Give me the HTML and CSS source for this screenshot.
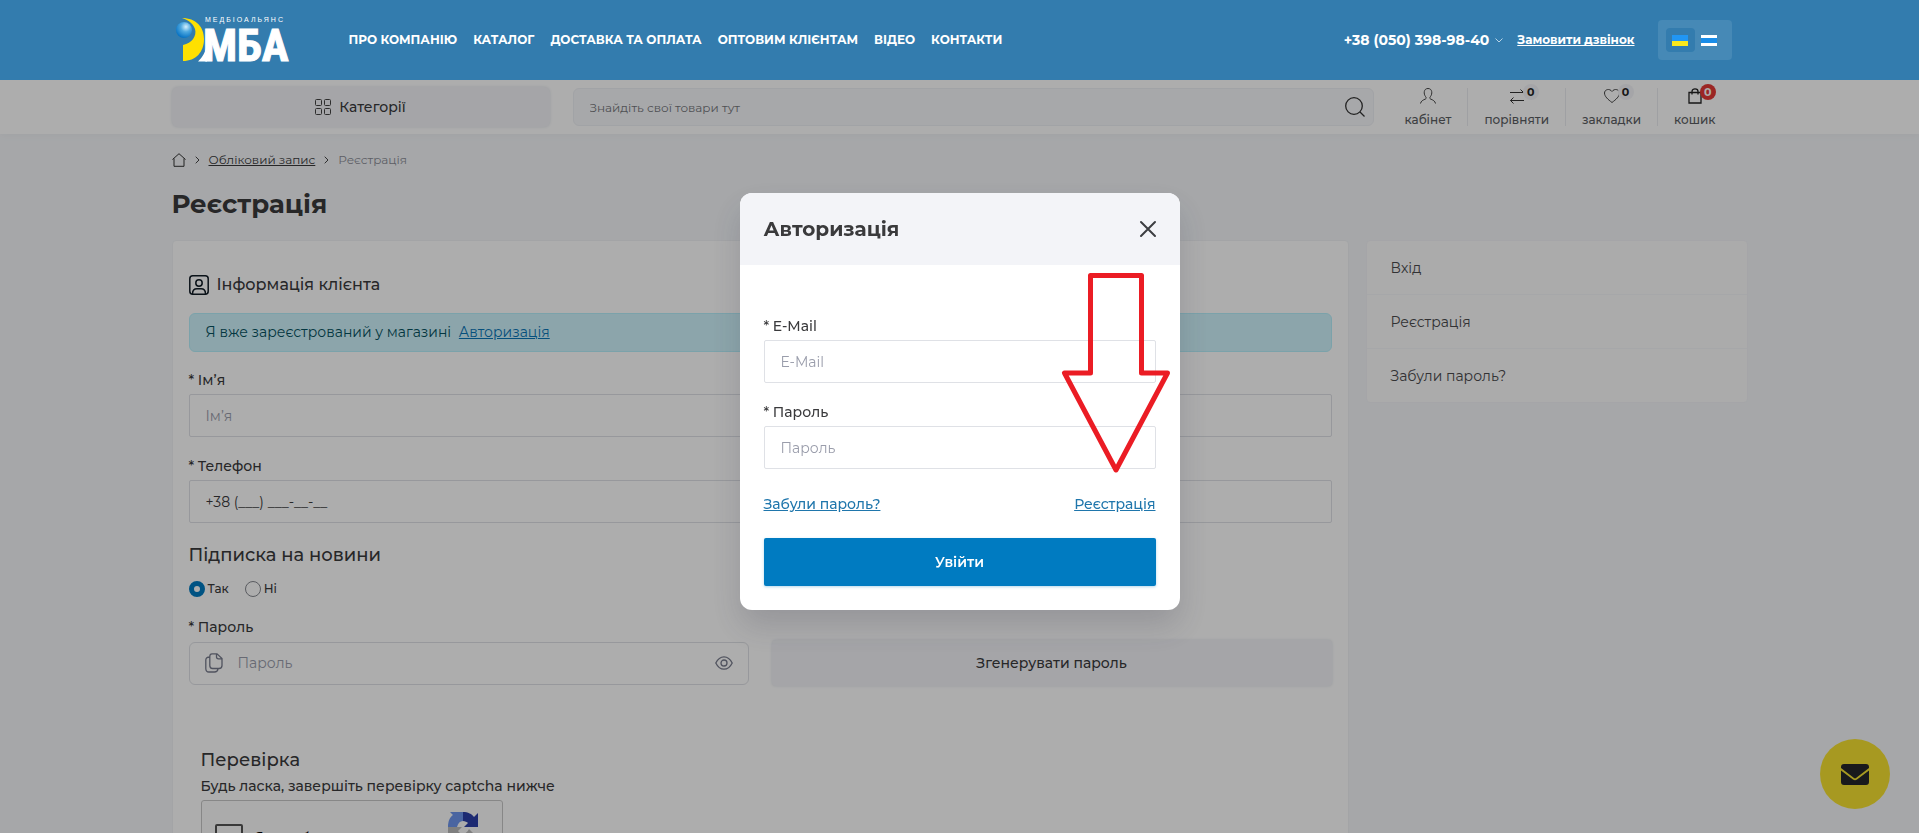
FILE: index.html
```html
<!DOCTYPE html>
<html lang="uk">
<head>
    <meta charset="UTF-8">
    <meta name="viewport" content="width=device-width, initial-scale=1.0">
    <title>Реєстрація</title>
    <link rel="stylesheet" href="styles.css">
</head>
<body class="modal-open">
    <header class="top">
        <div class="container top-inner">
            <a href="#" class="logo" aria-label="МБА">
                <svg width="116" height="46" viewBox="0 0 116 46">
                    <defs>
                        <radialGradient id="ball" cx="0.62" cy="0.3" r="0.7">
                            <stop offset="0" stop-color="#d5f0fd"/>
                            <stop offset="0.45" stop-color="#4fa9e0"/>
                            <stop offset="1" stop-color="#0873c4"/>
                        </radialGradient>
                    </defs>
                    <path d="M6 1C20 1 28 10 28 22C28 35 20 44 7 44V28C16 26 21 19 19 12C17 6 12 3 6 1Z" fill="#ffe000"/>
                    <circle cx="8" cy="13" r="8" fill="url(#ball)"/>
                    <path d="M22 44.500C28 39 31 32 31 22V44.500Z" fill="#fff"/>
                    <text x="29" y="5" class="logo-small">МЕДБІОАЛЬЯНС</text>
                    <text x="27" y="44" class="logo-big">МБА</text>
                </svg>
            </a>
            <nav class="menu">
                <a href="#">ПРО КОМПАНІЮ</a>
                <a href="#">КАТАЛОГ</a>
                <a href="#">ДОСТАВКА ТА ОПЛАТА</a>
                <a href="#">ОПТОВИМ КЛІЄНТАМ</a>
                <a href="#">ВІДЕО</a>
                <a href="#">КОНТАКТИ</a>
            </nav>
            <button type="button" class="phone">+38 (050) 398-98-40
                <svg width="8" height="5" viewBox="0 0 8 5" fill="none" stroke="#b8d3e6"><path d="M.5 .5L4 4L7.5 .5"/></svg>
            </button>
            <a href="#" class="callback">Замовити дзвінок</a>
            <div class="lang">
                <button type="button" class="lang-btn active" aria-label="Українська">
                    <svg width="16" height="11"><rect width="16" height="6" fill="#2196f3"/><rect y="6" width="16" height="5" fill="#f9e81c"/></svg>
                </button>
                <button type="button" class="lang-btn" aria-label="Інша мова">
                    <svg width="16" height="11"><rect width="16" height="11" fill="#fff"/><rect y="3" width="16" height="5" fill="#1a8de8"/></svg>
                </button>
            </div>
        </div>
    </header>

    <div class="bar">
        <div class="container bar-inner">
            <button type="button" class="categories">
                <svg width="16" height="16" viewBox="0 0 16 16" fill="none" stroke="#444"><rect x=".5" y=".5" width="6" height="6" rx="1"/><rect x="9.500" y=".5" width="6" height="6" rx="1"/><rect x=".5" y="9.500" width="6" height="6" rx="1"/><rect x="9.500" y="9.500" width="6" height="6" rx="1"/></svg>
                Категорії
            </button>
            <form class="search">
                <input type="text" placeholder="Знайдіть свої товари тут" aria-label="Пошук">
                <button type="submit" aria-label="Шукати">
                    <svg width="20" height="20" viewBox="0 0 20 20" fill="none" stroke="#333" stroke-width="1.300"><circle cx="9" cy="9" r="8.300"/><path d="M15 15L19.500 19.500"/></svg>
                </button>
            </form>
            <div class="actions">
                <a href="#" class="action">
                    <span class="action-icon"><svg width="16" height="16" viewBox="0 0 16 16" fill="none" stroke="#444"><path d="M.5 15.500C1 13 3 12 5.500 11C6.500 10.500 6.300 9.500 5.500 8.500C3.500 6 3.500 .5 8 .5S12.500 6 10.500 8.500C9.700 9.500 9.500 10.500 10.500 11C13 12 15 13 15.500 15.500"/></svg></span>
                    кабінет
                </a>
                <a href="#" class="action">
                    <span class="action-icon"><svg width="16" height="16" viewBox="0 0 16 16" fill="none" stroke="#333"><path d="M1 4.500H14.500M11.500 1.500L14.500 4.500M15 12.500H1.500M4.500 15.500L1.500 12.500L4.500 9.500"/></svg><span class="count">0</span></span>
                    порівняти
                </a>
                <a href="#" class="action">
                    <span class="action-icon"><svg width="16" height="16" viewBox="0 0 16 16" fill="none" stroke="#444"><path d="M8 14.500C4 11.500 .5 8.500 .5 5C.5 1.500 5.500 0 8 3.500C10.500 0 15.500 1.500 15.500 5C15.500 8.500 12 11.500 8 14.500Z"/></svg><span class="count">0</span></span>
                    закладки
                </a>
                <a href="#" class="action">
                    <span class="action-icon"><svg width="14" height="16" viewBox="0 0 14 16" fill="none" stroke="#222" stroke-width="1.300"><path d="M1 4.500H13V15H1ZM4 6.500V3.500C4 0 10 0 10 3.500V6.500"/></svg><span class="count count-cart">0</span></span>
                    кошик
                </a>
            </div>
        </div>
    </div>

    <main class="container">
        <nav class="breadcrumbs">
            <a href="#" aria-label="Головна"><svg width="14" height="14" viewBox="0 0 14 14" fill="none" stroke="#333"><path d="M.5 6.500L7 .7L13.500 6.500M2 5.500V13.300H12V5.500"/></svg></a>
            <svg width="5" height="8" viewBox="0 0 5 8" fill="none" stroke="#444"><path d="M.7 .7L4 4L.7 7.300"/></svg>
            <a href="#">Обліковий запис</a>
            <svg width="5" height="8" viewBox="0 0 5 8" fill="none" stroke="#444"><path d="M.7 .7L4 4L.7 7.300"/></svg>
            <span>Реєстрація</span>
        </nav>
        <h1>Реєстрація</h1>

        <div class="columns">
            <form class="card">
                <h2 class="info-title">
                    <svg width="20" height="20" viewBox="0 0 20 20" fill="none" stroke="#111c26" stroke-width="1.500"><rect x=".8" y=".8" width="18.400" height="18.400" rx="3"/><circle cx="10" cy="8" r="3.200"/><path d="M3.500 19C3.500 15.500 5.500 13.800 8 13.800H12C14.500 13.800 16.500 15.500 16.500 19"/></svg>
                    Інформація клієнта
                </h2>
                <div class="alert">Я вже зареєстрований у магазині <a href="#">Авторизація</a></div>

                <div class="field">
                    <label for="name">* Ім’я</label>
                    <input type="text" id="name" class="input" placeholder="Ім’я">
                </div>
                <div class="field">
                    <label for="phone">* Телефон</label>
                    <input type="tel" id="phone" class="input" value="+38 (___) ___-__-__">
                </div>

                <h2 class="section-title">Підписка на новини</h2>
                <div class="radios">
                    <label><input type="radio" name="newsletter" checked>Так</label>
                    <label><input type="radio" name="newsletter">Ні</label>
                </div>

                <div class="field field-password">
                    <label for="password">* Пароль</label>
                    <div class="password-row">
                        <div class="password-box">
                            <svg width="18" height="20" viewBox="0 0 18 20" fill="none" stroke="#777b8c" stroke-width="1.300"><path d="M7 .8H12L17 5.500V12.500Q17 15.500 14 15.500H7.500Q4.800 15.500 4.800 12.500V3.500Q4.800 .8 7 .8ZM11.500 1V4Q11.500 5.800 13.500 5.800H17M4.800 4Q.8 4 .8 7V15.500Q.8 19 4 19H9.500Q12.500 19 13 15.800"/></svg>
                            <input type="password" id="password" placeholder="Пароль">
                            <button type="button" aria-label="Показати пароль">
                                <svg width="18" height="14" viewBox="0 0 18 14" fill="none" stroke="#777b8c" stroke-width="1.300"><path d="M.8 7C3 2.500 6 .8 9 .8S15 2.500 17.200 7C15 11.500 12 13.200 9 13.200S3 11.500 .8 7Z"/><circle cx="9" cy="7" r="3"/></svg>
                            </button>
                        </div>
                        <button type="button" class="generate">Згенерувати пароль</button>
                    </div>
                </div>

                <fieldset class="captcha">
                    <legend>Перевірка</legend>
                    <p>Будь ласка, завершіть перевірку captcha нижче</p>
                    <div class="recaptcha">
                        <label><input type="checkbox">Я не робот</label>
                        <svg width="32" height="32" viewBox="0 0 32 32">
                            <path d="M1 16C1 10 3 6 6 4L3 1H16V10C13 10 11 12 10 16Z" fill="#6e96ee"/>
                            <path d="M16 1C21 1 25 3 27 6L31 2V16H17L21 12C20 11 18 10 16 10Z" fill="#2b3fa8"/>
                            <path d="M1 16H15L11 20C14 24 19 24 22 18L28 24C21 34 10 33 5 26L1 30Z" fill="#bbb"/>
                        </svg>
                    </div>
                </fieldset>
            </form>

            <aside class="side">
                <a href="#">Вхід</a>
                <a href="#">Реєстрація</a>
                <a href="#">Забули пароль?</a>
            </aside>
        </div>
    </main>

    <button type="button" class="fab" aria-label="Написати нам">
        <svg width="28" height="21" viewBox="0 0 28 21"><path d="M0 3Q0 0 3 0H25Q28 0 28 3V4L15 14Q14 14.800 13 14L0 4Z" fill="#26262a"/><path d="M0 6.500L12 15.500Q14 17 16 15.500L28 6.500V18Q28 21 25 21H3Q0 21 0 18Z" fill="#26262a"/></svg>
    </button>

    <div class="overlay">
        <div class="modal" role="dialog" aria-labelledby="modal-title">
            <div class="modal-header">
                <h2 id="modal-title">Авторизація</h2>
                <button type="button" class="close" aria-label="Закрити">
                    <svg width="16" height="16" viewBox="0 0 16 16" stroke="#3c3e42" stroke-width="2" stroke-linecap="round"><path d="M1 1L15 15M15 1L1 15"/></svg>
                </button>
            </div>
            <form class="modal-body">
                <div class="field">
                    <label for="login-email">* E-Mail</label>
                    <input type="email" id="login-email" class="input" placeholder="E-Mail">
                </div>
                <div class="field">
                    <label for="login-password">* Пароль</label>
                    <input type="password" id="login-password" class="input" placeholder="Пароль">
                </div>
                <div class="modal-links">
                    <a href="#">Забули пароль?</a>
                    <a href="#">Реєстрація</a>
                </div>
                <button type="submit" class="submit">Увійти</button>
            </form>
            <svg class="arrow" width="108" height="202" viewBox="0 0 108 202" fill="none" stroke="#eb1c24" stroke-width="5" stroke-linejoin="round"><path d="M28.500 2.500H79.500V100H105.500L54 197L2.500 100H28.500Z"/></svg>
        </div>
    </div>
</body>
</html>
```
FILE: styles.css
```css
* {
    box-sizing: border-box;
}
body {
    margin: 0;
    font-family: "Montserrat", "Inter", sans-serif;
    font-size: 14px;
    font-weight: 500;
    line-height: 20px;
    color: #3a3a3c;
    background-color: #f5f7fa;
}
.modal-open {
    height: 100vh;
    overflow: hidden;
}
button, input {
    font-family: inherit;
    font-size: inherit;
    color: inherit;
}
button {
    border: 0;
    padding: 0;
    background: none;
    font-weight: 500;
    cursor: pointer;
}
input::placeholder {
    color: #9a9dab;
    opacity: 1;
}
svg {
    display: block;
    flex-shrink: 0;
    overflow: visible;
}
.container {
    max-width: 1600px;
    margin: 0 auto;
    padding: 0 12px;
}

/* header */
.top {
    position: relative;
    z-index: 20;
    background-color: #337cae;
    color: #fff;
}
.top a {
    color: #fff;
}
.top-inner {
    display: flex;
    align-items: center;
    height: 80px;
    padding-right: 28px;
}
.logo {
    margin-left: 4px;
    margin-right: 57px;
}
.logo-small {
    font: 7px "Liberation Sans", sans-serif;
    letter-spacing: 2px;
    fill: #fff;
}
.logo-big {
    font: bold 45px "Roboto Condensed", "Liberation Sans Narrow", sans-serif;
    fill: #fff;
    stroke: #fff;
    stroke-width: 1px;
}
.menu {
    display: flex;
    gap: 16px;
    margin-right: auto;
    font-size: 12px;
    font-weight: 700;
}
.menu a {
    text-decoration: none;
}
.phone {
    display: flex;
    align-items: center;
    gap: 6px;
    font-size: 14px;
    font-weight: 700;
}
.callback {
    margin: 0 23px 0 14px;
    font-size: 12px;
    font-weight: 700;
}
.lang {
    display: flex;
    padding: 8px;
    border-radius: 4px;
    background-color: #4689b6;
}
.lang-btn {
    display: flex;
    align-items: center;
    justify-content: center;
    width: 29px;
    height: 24px;
    border-radius: 4px;
}
.lang-btn.active {
    background-color: #337cae;
}

/* search bar */
.bar {
    background-color: #fff;
    box-shadow: 0 2px 8px rgba(0,0,0,0.03);
}
.bar-inner {
    display: flex;
    align-items: center;
    height: 54px;
    padding-right: 28px;
}
.categories {
    display: flex;
    align-items: center;
    justify-content: center;
    gap: 8px;
    width: 378px;
    height: 40px;
    margin-right: 23px;
    border-radius: 6px;
    background-color: #f3f4f8;
    box-shadow: 0 0 3px #dfe3ea;
}
.search {
    display: flex;
    align-items: center;
    flex: 1;
    height: 38px;
    padding: 0 8px 0 16px;
    border: 1px solid #eef0f5;
    border-radius: 6px;
    background-color: #f7f8fb;
}
.search input {
    flex: 1;
    border: 0;
    padding: 0;
    background: none;
    font-size: 12px;
}
.search input::placeholder {
    color: #75777c;
}
.actions {
    display: flex;
    margin-left: 15px;
}
.action {
    display: flex;
    flex-direction: column;
    align-items: center;
    gap: 8px;
    height: 38px;
    padding: 0 16px;
    border-left: 1px solid #eaecf0;
    font-size: 12px;
    line-height: 16px;
    color: #5b5d62;
    text-decoration: none;
}
.action:first-child {
    border-left: 0;
}
.action-icon {
    position: relative;
}
.count {
    position: absolute;
    top: -4px;
    left: 14px;
    width: 16px;
    border-radius: 8px;
    background-color: #f3f4f8;
    font-size: 11px;
    font-weight: 700;
    text-align: center;
    color: #222;
}
.count-cart {
    left: 12px;
    background-color: #e53935;
    color: #fff;
}

/* page */
.breadcrumbs {
    display: flex;
    align-items: center;
    gap: 9px;
    padding-top: 16px;
    font-size: 12px;
    font-weight: 400;
}
.breadcrumbs a {
    color: #3a3a3c;
}
.breadcrumbs span {
    color: #8b8d96;
}
h1 {
    margin: 17px 0 19px;
    font-size: 26px;
    line-height: 34px;
}
.columns {
    display: grid;
    grid-template-columns: minmax(0, 1177fr) minmax(0, 382fr);
    gap: 17px;
    align-items: start;
}
.card {
    padding: 34px 16px 40px;
    border: 1px solid #f0f2f5;
    border-radius: 4px;
    background-color: #fff;
}
.info-title {
    display: flex;
    align-items: center;
    gap: 8px;
    margin: 0 0 18px;
    font-size: 16px;
    font-weight: 500;
}
.alert {
    padding: 8px 16px 9px;
    border: 1px solid #b6effb;
    border-radius: 6px;
    background-color: #cff4fc;
    font-weight: 400;
    color: #055160;
}
.alert a {
    margin-left: 4px;
    color: #0a76b8;
}
.field {
    margin-top: 18px;
}
.field label {
    display: block;
    margin-bottom: 4px;
}
.input {
    display: block;
    width: 100%;
    height: 43px;
    margin-bottom: 19px;
    padding: 0 16px;
    border: 1px solid #dfe1e6;
    border-radius: 2px;
    background-color: #fff;
}
.section-title {
    margin: 16px 0 11px;
    font-size: 18px;
    font-weight: 500;
    line-height: 26px;
}
.radios {
    display: flex;
    gap: 16px;
    font-size: 12px;
}
.radios label {
    display: flex;
    align-items: center;
    gap: 3px;
}
.radios input {
    appearance: none;
    width: 16px;
    height: 16px;
    margin: 0;
    border: 1px solid #85888f;
    border-radius: 50%;
}
.radios input:checked {
    border: 5px solid #007bc1;
    background-color: #fff;
}
.field-password label {
    margin-bottom: 3px;
}
.password-row {
    display: grid;
    grid-template-columns: 1fr 1fr;
    align-items: center;
    gap: 23px;
}
.password-box {
    display: flex;
    align-items: center;
    gap: 15px;
    height: 43px;
    padding: 0 15px;
    border: 1px solid #dfe1e6;
    border-radius: 6px;
}
.password-box input {
    flex: 1;
    min-width: 0;
    border: 0;
    padding: 0;
    background: none;
}
.generate {
    height: 46px;
    border-radius: 4px;
    background-color: #f3f4f8;
    box-shadow: 0 0 3px #dfe3ea;
}
.captcha {
    margin: 61px 0 0;
    padding: 0 12px;
    border: 0;
}
.captcha legend {
    padding: 0;
    font-size: 18px;
    line-height: 26px;
}
.captcha p {
    margin: 3px 0 4px;
}
.recaptcha {
    display: flex;
    justify-content: space-between;
    width: 302px;
    height: 76px;
    padding: 10px 23px 10px 13px;
    border: 1px solid #c8c8c8;
    border-radius: 3px;
    background-color: #fcfcfc;
    font-family: Roboto, sans-serif;
    font-weight: 400;
}
.recaptcha label {
    display: flex;
    align-items: center;
    gap: 12px;
    color: #000;
}
.recaptcha input {
    appearance: none;
    width: 28px;
    height: 28px;
    margin: 0;
    border: 2px solid #555;
    border-radius: 2px;
}
.side {
    border: 1px solid #f3f4f8;
    border-radius: 4px;
    background-color: #fcfcfc;
    font-weight: 400;
}
.side a {
    display: block;
    padding: 17px 24px 16px;
    color: #4a4a4d;
    text-decoration: none;
}
.side a + a {
    border-top: 1px solid #f5f6f9;
}
.fab {
    position: fixed;
    right: 29px;
    bottom: 24px;
    display: flex;
    align-items: center;
    justify-content: center;
    width: 70px;
    height: 70px;
    border-radius: 50%;
    background-color: #f7e232;
}

/* login dialog */
.overlay {
    position: fixed;
    inset: 0;
    z-index: 10;
    display: flex;
    align-items: center;
    justify-content: center;
    padding-bottom: 30px;
    background-color: rgba(0,0,0,0.32);
}
.modal {
    position: relative;
    width: 440px;
    border-radius: 12px;
    background-color: #fff;
    box-shadow: 0 16px 32px rgba(40,40,60,0.18);
}
.modal-header {
    display: flex;
    align-items: center;
    justify-content: space-between;
    padding: 24px;
    border-radius: 12px 12px 0 0;
    background-color: #f3f4f8;
}
.modal-header h2 {
    margin: 0;
    font-size: 20px;
    line-height: 24px;
}
.modal-body {
    padding: 33px 24px 24px;
}
.modal-links {
    display: flex;
    justify-content: space-between;
    margin: 25px 0 24px;
}
.modal-links a {
    color: #1f76ac;
}
.submit {
    width: 100%;
    height: 48px;
    border-radius: 2px;
    background-color: #007bc1;
    box-shadow: 0 1px 3px rgba(0,123,193,0.3);
    color: #fff;
    font-weight: 600;
}
/* pointer to the registration link */
.arrow {
    position: absolute;
    top: 80px;
    right: 10px;
    pointer-events: none;
}
```
